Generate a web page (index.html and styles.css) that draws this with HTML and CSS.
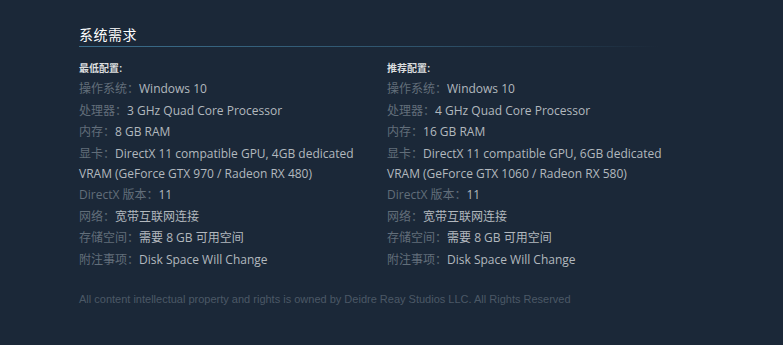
FILE: index.html
```html
<!DOCTYPE html>
<html lang="zh-CN">
<head>
<meta charset="utf-8">
<title>系统需求</title>
<link rel="stylesheet" href="styles.css">
</head>
<body>
<div class="page">
  <h2 class="title">系统需求</h2>
  <div class="cols">
    <div class="col">
      <div class="col-head">最低配置:</div>
      <ul class="reqs">
        <li><span class="k">操作系统：</span>Windows 10</li>
        <li><span class="k">处理器：</span>3 GHz Quad Core Processor</li>
        <li><span class="k">内存：</span>8 GB RAM</li>
        <li><span class="k">显卡：</span>DirectX 11 compatible GPU, 4GB dedicated VRAM (GeForce GTX 970 / Radeon RX 480)</li>
        <li><span class="k">DirectX 版本：</span>11</li>
        <li><span class="k">网络：</span>宽带互联网连接</li>
        <li><span class="k">存储空间：</span>需要 8 GB 可用空间</li>
        <li><span class="k">附注事项：</span>Disk Space Will Change</li>
      </ul>
    </div>
    <div class="col">
      <div class="col-head">推荐配置:</div>
      <ul class="reqs">
        <li><span class="k">操作系统：</span>Windows 10</li>
        <li><span class="k">处理器：</span>4 GHz Quad Core Processor</li>
        <li><span class="k">内存：</span>16 GB RAM</li>
        <li><span class="k">显卡：</span>DirectX 11 compatible GPU, 6GB dedicated VRAM (GeForce GTX 1060 / Radeon RX 580)</li>
        <li><span class="k">DirectX 版本：</span>11</li>
        <li><span class="k">网络：</span>宽带互联网连接</li>
        <li><span class="k">存储空间：</span>需要 8 GB 可用空间</li>
        <li><span class="k">附注事项：</span>Disk Space Will Change</li>
      </ul>
    </div>
  </div>
  <p class="legal">All content intellectual property and rights is owned by Deidre Reay Studios LLC. All Rights Reserved</p>
</div>
</body>
</html>
```

FILE: styles.css
```css
html, body {
  margin: 0;
  padding: 0;
  background: #1b2838;
}

body {
  font-family: "Open Sans", "Noto Sans CJK SC", sans-serif;
  color: #b2b8be;
  height: 345px;
  overflow: hidden;
}

.page {
  width: 616px;
  padding: 26px 0 0 79px;
}

.title {
  margin: 0;
  font-family: "Liberation Sans", Arial, "Noto Sans CJK SC", sans-serif;
  font-size: 14px;
  font-weight: normal;
  color: #ffffff;
  line-height: 18px;
  padding-bottom: 2px;
  letter-spacing: 0.5px;
}

.title::after {
  content: "";
  display: block;
  height: 1px;
  width: 580px;
  margin-top: 2px;
  background: linear-gradient(to right, #3b6e8c 0%, rgba(59, 110, 140, 0.6) 60%, rgba(59, 110, 140, 0) 100%);
}

.cols {
  display: flex;
  margin-top: 13px;
}

.col {
  width: 308px;
  flex: none;
}

.col-head {
  font-family: "Liberation Sans", Arial, "Noto Sans CJK SC", sans-serif;
  font-size: 10px;
  font-weight: bold;
  color: #dcdedf;
  line-height: 14px;
  margin-bottom: 3px;
}

.reqs {
  list-style: none;
  margin: 0;
  padding: 0;
  font-size: 12px;
  line-height: 20px;
  width: 300px;
}

.reqs li {
  margin-bottom: 1.5px;
}

.k {
  color: #626e7a;
}

.legal {
  margin: 21px 0 0;
  font-family: "Liberation Sans", Arial, sans-serif;
  font-size: 11px;
  line-height: 14px;
  color: #4b5866;
}
```
